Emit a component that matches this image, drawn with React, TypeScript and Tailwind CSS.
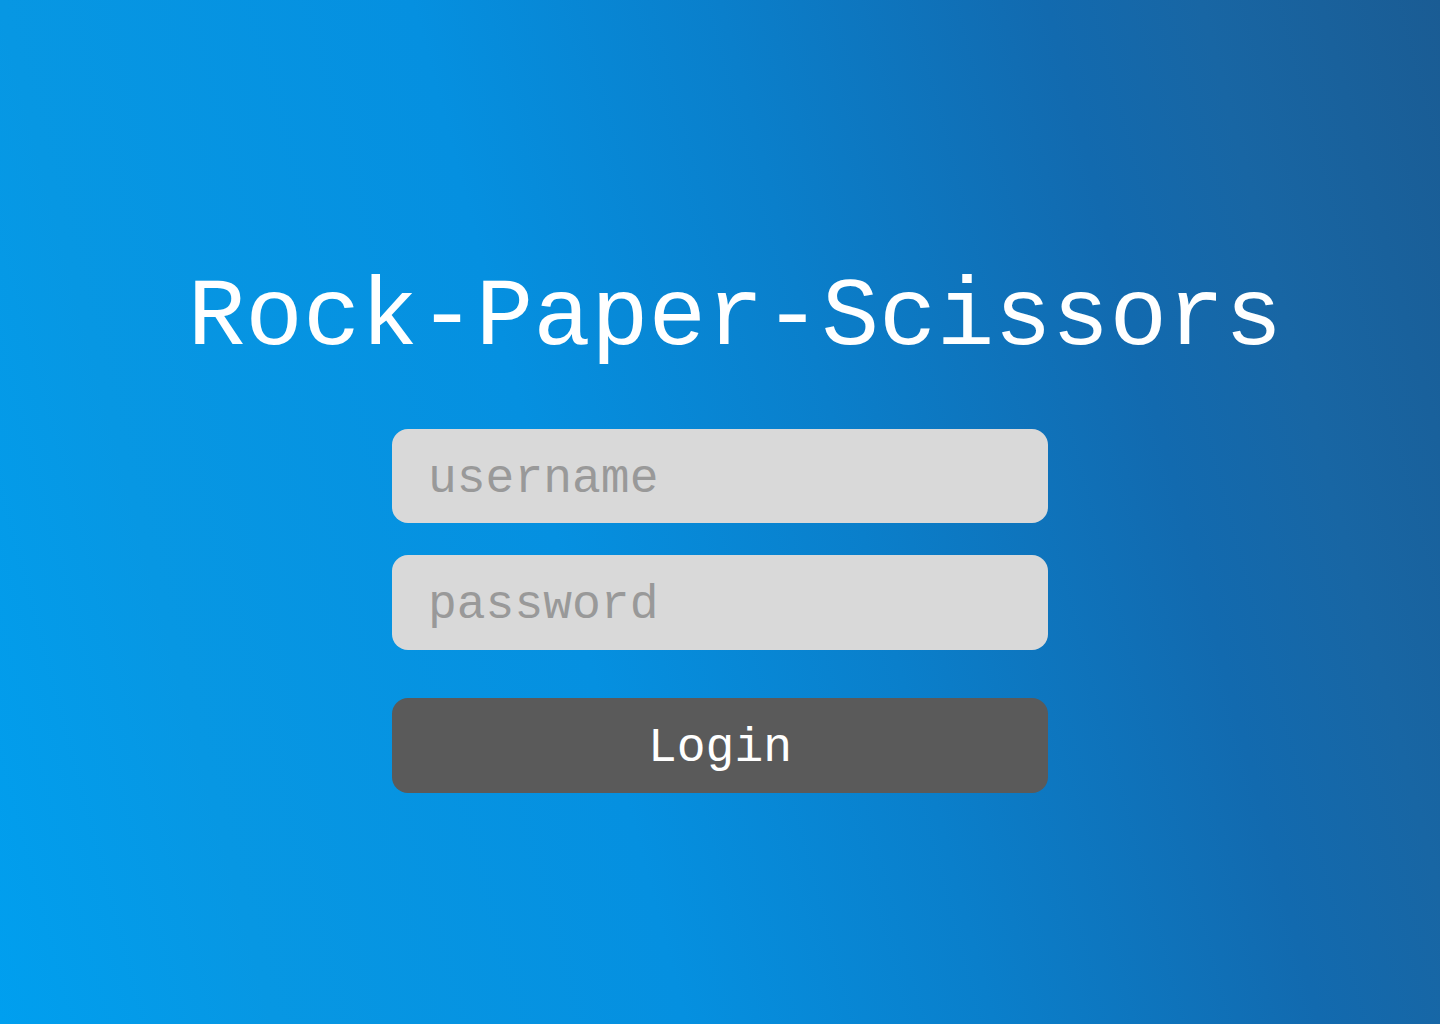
import { useState } from 'react';

export default function App() {
  const [username, setUsername] = useState('');
  const [password, setPassword] = useState('');

  return (
    <main className="flex min-h-screen w-full flex-col items-center bg-[linear-gradient(75deg,#009fef_0%,#0797e3_16%,#0590e0_40%,#0a7fcb_58%,#126aaf_77%,#1866a4_86%,#1a5c94_100%)] pt-[271px] font-['Liberation_Mono','DejaVu_Sans_Mono',monospace]">
      <h1 className="ml-[30px] text-[96px] leading-none text-white">Rock-Paper-Scissors</h1>
      <form className="mt-[62px] flex w-[656px] flex-col" onSubmit={(e) => e.preventDefault()}>
        <input
          value={username}
          onChange={(e) => setUsername(e.target.value)}
          placeholder="username"
          className="h-[94px] rounded-2xl bg-[#d9d9d9] px-9 pt-[5px] text-[48px] text-[#555] outline-none placeholder:text-[#999999]"
        />
        <input
          type="password"
          value={password}
          onChange={(e) => setPassword(e.target.value)}
          placeholder="password"
          className="mt-8 h-[95px] rounded-2xl bg-[#d9d9d9] px-9 pt-[5px] text-[48px] text-[#555] outline-none placeholder:text-[#999999]"
        />
        <button type="submit" className="mt-12 h-[95px] rounded-2xl bg-[#5a5a5a] pt-[4px] text-[48px] text-white">
          Login
        </button>
      </form>
    </main>
  );
}
